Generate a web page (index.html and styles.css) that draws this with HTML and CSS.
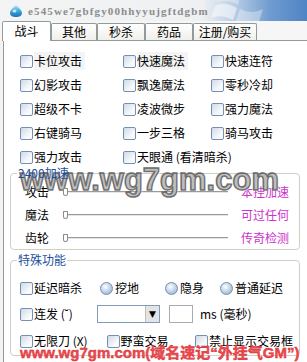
FILE: index.html
```html
<!DOCTYPE html>
<html lang="zh-CN">
<head>
<meta charset="utf-8" />
<title>e545we7gbfgy00hhyyujgftdgbm</title>
<link rel="stylesheet" href="styles.css">
</head>
<body>

<div class="titlebar">
	<svg class="appicon" width="14" height="14" viewBox="0 0 14 14">
		<defs>
			<linearGradient id="drop" x1="0" y1="0" x2="0" y2="1">
				<stop offset="0" stop-color="#bfe6f7"/>
				<stop offset="0.5" stop-color="#3fa7dc"/>
				<stop offset="1" stop-color="#1a6fb6"/>
			</linearGradient>
		</defs>
		<path d="M7 1 C9 3 13 6 13 9 C13 12 10 13 7 13 C4 13 1 12 1 9 C1 6 5 3 7 1 Z" fill="url(#drop)"/>
		<ellipse cx="5.5" cy="7" rx="2" ry="1.5" fill="#e8f6fc" opacity="0.8"/>
	</svg>
	<span class="title">e545we7gbfgy00hhyyujgftdgbm</span>
	<svg class="flag" width="70" height="30" viewBox="0 0 70 30">
		<path d="M8 10 C16 6 22 8 30 12 L26 24 C18 20 12 19 4 22 Z" fill="#ffffff" opacity="0.5"/>
		<path d="M33 13 C41 17 48 17 56 13 L52 26 C44 29 37 28 29 25 Z" fill="#ffffff" opacity="0.35"/>
		<path d="M12 -4 C20 -6 26 -4 33 0 L31 9 C24 5 18 4 10 6 Z" fill="#ffffff" opacity="0.3"/>
	</svg>
</div>

<div class="tabs">
	<span class="tab on" style="width:49px">战斗</span>
	<span class="tab" style="width:46px">其他</span>
	<span class="tab" style="width:48px">秒杀</span>
	<span class="tab" style="width:48px">药品</span>
	<span class="tab" style="width:64px">注册/购买</span>
</div>

<div class="panel">
	<div class="checks">
		<label class="chk"><i class="box"></i><span class="hl">卡位攻击</span></label>
		<label class="chk"><i class="box"></i><span class="hl">快速魔法</span></label>
		<label class="chk"><i class="box"></i>快速连符</label>
		<label class="chk"><i class="box"></i>幻影攻击</label>
		<label class="chk"><i class="box"></i>飘逸魔法</label>
		<label class="chk"><i class="box"></i>零秒冷却</label>
		<label class="chk"><i class="box"></i>超级不卡</label>
		<label class="chk"><i class="box"></i>凌波微步</label>
		<label class="chk"><i class="box"></i>强力魔法</label>
		<label class="chk"><i class="box"></i>右键骑马</label>
		<label class="chk"><i class="box"></i>一步三格</label>
		<label class="chk"><i class="box"></i>骑马攻击</label>
		<label class="chk"><i class="box"></i>强力攻击</label>
		<label class="chk wide"><i class="box"></i>天眼通 (看清暗杀)</label>
	</div>

	<fieldset class="group speed">
		<legend>2400加速</legend>
		<div class="srow">
			<span class="slabel">攻击</span>
			<span class="slider"><i class="thumb"></i><i class="track"></i></span>
			<span class="note">本挂加速</span>
		</div>
		<div class="srow">
			<span class="slabel">魔法</span>
			<span class="slider"><i class="thumb"></i><i class="track"></i></span>
			<span class="note">可过任何</span>
		</div>
		<div class="srow">
			<span class="slabel">齿轮</span>
			<span class="slider"><i class="thumb"></i><i class="track"></i></span>
			<span class="note">传奇检测</span>
		</div>
	</fieldset>

	<fieldset class="group special">
		<legend>特殊功能</legend>
		<div class="frow r1">
			<label class="chk c1"><i class="box"></i>延迟暗杀</label>
			<label class="chk c2"><i class="radio"></i>挖地</label>
			<label class="chk c3"><i class="radio"></i>隐身</label>
			<label class="chk"><i class="radio"></i>普通延迟</label>
		</div>
		<div class="frow r2">
			<label class="chk c1b"><i class="box"></i>连发 (˘)</label>
			<span class="combo"><i class="arrow">▼</i></span>
			<span class="edit"></span>
			<span class="unit">ms (毫秒)</span>
		</div>
		<div class="frow r3">
			<label class="chk c1c"><i class="box"></i>无限刀 (X)</label>
			<label class="chk c2c"><i class="box"></i>野蛮交易</label>
			<label class="chk"><i class="box"></i>禁止显示交易框</label>
		</div>
	</fieldset>

	<div class="mark big">www.wg7gm.com</div>
	<div class="mark red">www.wg7gm.com(域名速记“外挂气GM”)</div>
</div>

</body>
</html>
```

FILE: styles.css
```css
* {box-sizing: border-box;}

body {
	margin: 0;
	width: 307px;
	height: 362px;
	overflow: hidden;
	background: #f2f2f0;
	font: 12px/14px "Noto Sans CJK SC", "Liberation Sans", sans-serif;
	color: #000;
}

/* --------------------------------- */

.titlebar {
	position: relative;
	height: 21px;
	display: flex;
	align-items: center;
	padding-left: 9px;
	overflow: hidden;
	background: linear-gradient(90deg, #f4f4f4 0%, #eef0f2 66%, #bccfe6 76%, #6f9bd0 88%, #4f84c4 100%);
}
.title {
	margin-left: 5px;
	font: bold 11px "Liberation Serif", serif;
	letter-spacing: 1.15px;
	color: #8c8c8c;
	position: relative;
	z-index: 1;
}
.flag {
	position: absolute;
	right: 30px;
	top: -4px;
}

/* --------------------------------- */

.tabs {
	display: flex;
	align-items: flex-end;
	height: 19px;
	padding-left: 2px;
	background: #f6f6f6;
}
.tab {
	height: 17px;
	line-height: 16px;
	text-align: center;
	border: 1px solid #919b9c;
	border-bottom: none;
	border-radius: 2px 2px 0 0;
	background: linear-gradient(#ffffff, #f0efea);
}
.tab.on {
	height: 20px;
	line-height: 18px;
	margin-bottom: -1px;
	background: #fff;
	position: relative;
	z-index: 1;
}

/* --------------------------------- */

.panel {
	position: relative;
	height: 322px;
	margin-left: 3px;
	border-left: 1px solid #919b9c;
	border-top: 1px solid #919b9c;
	background: #fff;
}

.checks {
	display: grid;
	grid-template-columns: 103px 88px 1fr;
	grid-auto-rows: 24px;
	padding: 8px 0 0 16px;
}
.chk {
	display: flex;
	align-items: center;
	white-space: nowrap;
}
.chk.wide {grid-column: span 2;}
.hl {background: #f4f4f4; padding: 2px 3px 2px 0;}

.box, .radio {
	flex: none;
	width: 13px;
	height: 13px;
	margin-right: 1px;
	border: 1px solid #7390b4;
	border-radius: 2px;
	background: linear-gradient(135deg, #cfd9e6, #f8fafc 70%);
}
.radio {
	border-radius: 50%;
	margin-right: 2px;
	background: radial-gradient(circle at 40% 35%, #ffffff 0, #d3e0ef 35%, #8aa6c8 100%);
}

/* --------------------------------- */

.group {
	min-width: 0;
	border: 1px solid #cfcfc4;
	border-radius: 4px;
	padding: 0 6px;
}
.group legend {
	position: relative;
	z-index: 2;
	padding: 0 1px;
	line-height: 14px;
	color: #1d4f9c;
}
.speed {margin: -3px 7px 0 6px;}
.special {margin: 3px 7px 0 6px; padding-top: 8px;}

.srow {
	display: flex;
	align-items: center;
	height: 23px;
	padding-left: 8px;
}
.slabel {width: 35px;}
.slider {
	position: relative;
	display: flex;
	align-items: center;
	width: 168px;
	height: 10px;
}
.slider .thumb {
	width: 5px;
	height: 8px;
	margin-left: 3px;
	background: #fff;
	border: 1px solid #8a8a8a;
	border-radius: 1px 1px 3px 3px;
	position: relative;
	z-index: 1;
}
.slider .track {
	flex: 1;
	height: 2px;
	border-top: 1px solid #9a9a9a;
	border-bottom: 1px solid #e6e6e6;
	margin-left: -1px;
}
.note {margin-left: 13px; color: #cc33cc;}

.frow {
	display: flex;
	align-items: center;
	height: 26px;
	padding-left: 3px;
}
.frow.r3 {height: 28px;}
.c1 {width: 80px;}
.c2 {width: 65px;}
.c3 {width: 55px;}
.c1b {width: 77px;}
.c1c {width: 87px;}
.c2c {width: 89px;}

.combo {
	position: relative;
	width: 63px;
	height: 18px;
	border: 1px solid #7f9db9;
	background: #fff;
}
.combo .arrow {
	position: absolute;
	right: 0;
	top: 0;
	bottom: 0;
	width: 14px;
	background: #e4e4e4;
	border-left: 1px solid #c0c0c0;
	font: normal 9px/16px "DejaVu Sans", sans-serif;
	text-align: center;
}
.edit {
	width: 24px;
	height: 18px;
	margin-left: 9px;
	border: 1px solid #a5acb5;
	background: #fff;
}
.unit {margin-left: 7px;}

/* --------------------------------- */

.mark {
	position: absolute;
	white-space: nowrap;
	pointer-events: none;
	font-family: "Liberation Sans", "Noto Sans CJK SC", sans-serif;
	font-weight: bold;
}
.mark.big {
	left: 16px;
	top: 123px;
	font-size: 31px;
	line-height: 31px;
	color: rgba(150,150,150,0.6);
	-webkit-text-stroke: 1.4px rgba(85,85,85,0.8);
	text-shadow: 1px 1px 0 rgba(255,255,255,0.9), -1px -1px 0 rgba(120,120,120,0.3);
}
.mark.red {
	left: 16px;
	top: 304px;
	font-size: 15px;
	line-height: 15px;
	color: #ee4c50;
	-webkit-text-stroke: 0.4px #d42a30;
}
```
